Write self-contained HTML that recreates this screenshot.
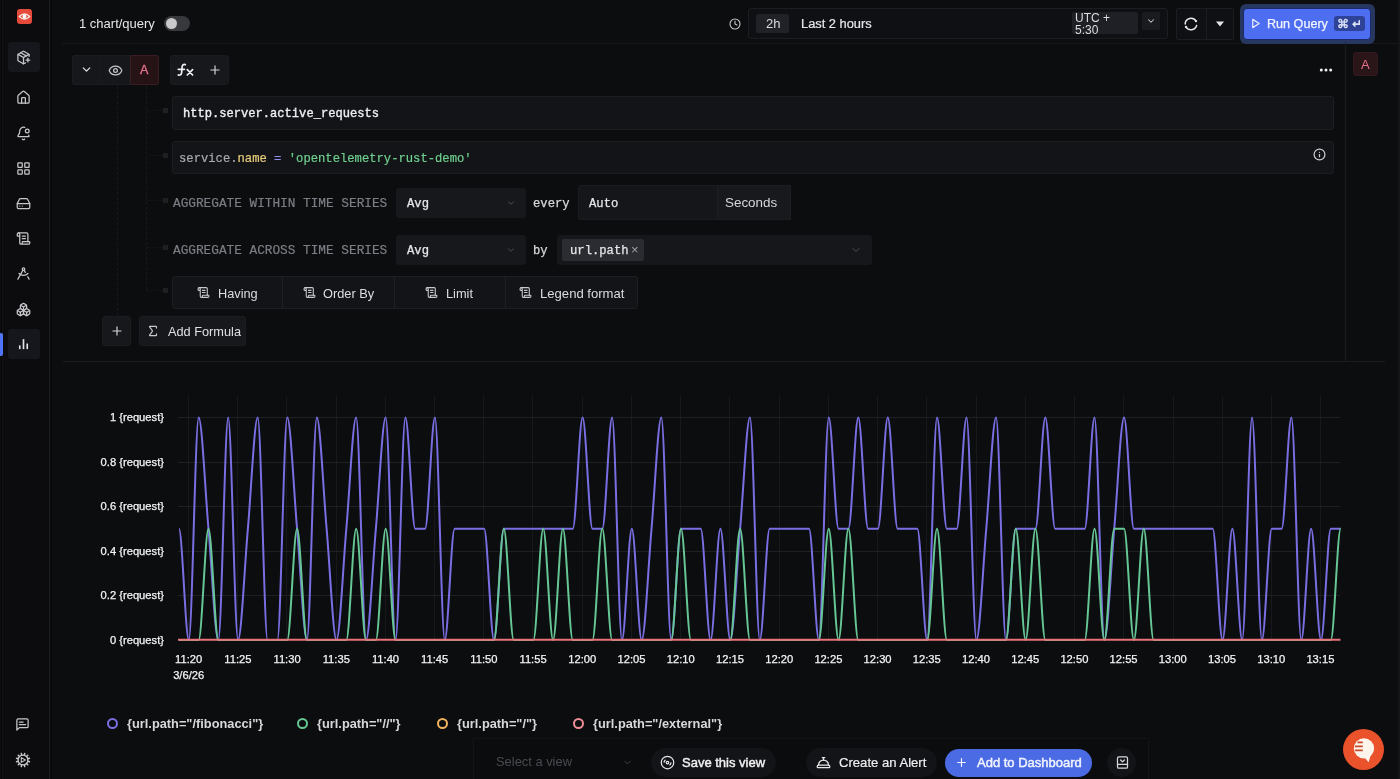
<!DOCTYPE html>
<html><head><meta charset="utf-8">
<style>
*{box-sizing:border-box;margin:0;padding:0}
html,body{width:1400px;height:779px;overflow:hidden;background:#0c0d0f;font-family:"Liberation Sans",sans-serif;color:#e3e3e6}
.a{position:absolute}
svg.i{position:absolute;fill:none;stroke:#c6c7cb;stroke-width:2;stroke-linecap:round;stroke-linejoin:round}
.mono{font-family:"Liberation Mono",monospace}
.t{position:absolute;white-space:nowrap;line-height:1}
.cell{position:absolute;background:#16181c}
</style></head><body><div id="root" style="position:absolute;left:0;top:0;width:1400px;height:779px;will-change:transform">

<!-- SIDEBAR -->
<div class="a" style="left:0;top:0;width:50px;height:779px;background:#0c0c0e;border-right:1px solid #1d1e21"></div><div class="a" style="left:50px;top:0;width:2px;height:779px;background:#09090b"></div><div class="a" style="left:1px;top:0;width:1px;height:779px;background:#070708"></div><div class="a" style="left:2px;top:0;width:1px;height:779px;background:#141417"></div>
<div class="a" style="left:17px;top:9px;width:15px;height:15px;border-radius:3px;background:#e64a3b"></div>
<svg class="a" style="left:17px;top:9px" width="15" height="15" viewBox="0 0 15 15"><path d="M2.3 7.5 Q7.5 2.6 12.7 7.5 Q7.5 12.4 2.3 7.5Z" fill="none" stroke="#f6e6e2" stroke-width="1.4"/><circle cx="7.5" cy="7.5" r="1.9" fill="#fff"/></svg>
<div class="a" style="left:8px;top:42px;width:32px;height:30px;border-radius:3px;background:#15171c"></div>
<svg class="i" style="left:16px;top:50px" width="15" height="15" viewBox="0 0 24 24"><path d="M16 16h6"/><path d="M19 13v6"/><path d="M21 10V8a2 2 0 0 0-1-1.73l-7-4a2 2 0 0 0-2 0l-7 4A2 2 0 0 0 3 8v8a2 2 0 0 0 1 1.73l7 4a2 2 0 0 0 2 0l2-1.14"/><path d="m7.5 4.27 9 5.15"/><polyline points="3.29 7 12 12 20.71 7"/><line x1="12" x2="12" y1="22" y2="12"/></svg>
<svg class="i" style="left:16px;top:90px" width="15" height="15" viewBox="0 0 24 24"><path d="M15 21v-8a1 1 0 0 0-1-1h-4a1 1 0 0 0-1 1v8"/><path d="M3 10a2 2 0 0 1 .709-1.528l7-5.999a2 2 0 0 1 2.582 0l7 5.999A2 2 0 0 1 21 10v9a2 2 0 0 1-2 2H5a2 2 0 0 1-2-2z"/></svg>
<svg class="i" style="left:16px;top:126px" width="15" height="15" viewBox="0 0 24 24"><path d="M10.268 21a2 2 0 0 0 3.464 0"/><path d="M13.916 2.314A6 6 0 0 0 6 8c0 4.499-1.411 5.956-2.74 7.327A1 1 0 0 0 4 17h16a1 1 0 0 0 .74-1.673 9 9 0 0 1-.585-.665"/><circle cx="18" cy="8" r="3"/></svg>
<svg class="i" style="left:16px;top:161px" width="15" height="15" viewBox="0 0 24 24"><rect width="7" height="7" x="3" y="3" rx="1"/><rect width="7" height="7" x="14" y="3" rx="1"/><rect width="7" height="7" x="14" y="14" rx="1"/><rect width="7" height="7" x="3" y="14" rx="1"/></svg>
<svg class="i" style="left:16px;top:196px" width="15" height="15" viewBox="0 0 24 24"><path d="M2 12h20"/><path d="M5.45 5.11 2 12v6a2 2 0 0 0 2 2h16a2 2 0 0 0 2-2v-6l-3.45-6.89A2 2 0 0 0 16.76 4H7.24a2 2 0 0 0-1.79 1.11z"/><path d="M6 16h.01"/><path d="M10 16h.01"/></svg>
<svg class="i" style="left:16px;top:231px" width="15" height="15" viewBox="0 0 24 24"><path d="M15 12h-5"/><path d="M15 8h-5"/><path d="M19 17V5a2 2 0 0 0-2-2H4"/><path d="M8 21h12a2 2 0 0 0 2-2v-1a1 1 0 0 0-1-1H11a1 1 0 0 0-1 1v1a2 2 0 1 1-4 0V5a2 2 0 1 0-4 0v2a1 1 0 0 0 1 1h3"/></svg>
<svg class="i" style="left:16px;top:266px" width="15" height="15" viewBox="0 0 24 24"><path d="m12.99 6.74 1.93 3.44"/><path d="M19.136 12a10 10 0 0 1-14.271 0"/><path d="m21 21-2.16-3.84"/><path d="m3 21 8.02-14.26"/><circle cx="12" cy="5" r="2"/></svg>
<svg class="i" style="left:16px;top:302px" width="15" height="15" viewBox="0 0 24 24"><path d="M2.97 12.92A2 2 0 0 0 2 14.63v3.24a2 2 0 0 0 .97 1.71l3 1.8a2 2 0 0 0 2.06 0L12 19v-5.5l-5-3-4.03 2.42Z"/><path d="m7 16.5-4.74-2.85"/><path d="m7 16.5 5-3"/><path d="M7 16.5v5.17"/><path d="M12 13.5V19l3.970 2.38a2 2 0 0 0 2.06 0l3-1.8a2 2 0 0 0 .97-1.71v-3.24a2 2 0 0 0-.97-1.71L17 10.5l-5 3Z"/><path d="m17 16.5-5-3"/><path d="m17 16.5 4.74-2.85"/><path d="M17 16.5v5.17"/><path d="M7.97 4.42A2 2 0 0 0 7 6.13v4.37l5 3 5-3V6.13a2 2 0 0 0-.97-1.71l-3-1.8a2 2 0 0 0-2.060 0l-3 1.8Z"/><path d="M12 8 7.26 5.15"/><path d="m12 8 4.74-2.85"/><path d="M12 13.5V8"/></svg>
<div class="a" style="left:0;top:333px;width:3px;height:23px;border-radius:0 2px 2px 0;background:#4f74f7"></div>
<div class="a" style="left:8px;top:329px;width:32px;height:30px;border-radius:3px;background:#15171c"></div>
<svg class="i" style="left:16px;top:336px;stroke:#e4e4e7;stroke-width:2.6;stroke-linecap:butt" width="15" height="15" viewBox="0 0 24 24"><path d="M18 21V12"/><path d="M12 21V5"/><path d="M6 21v-6"/></svg>
<svg class="i" style="left:15px;top:717px" width="15" height="15" viewBox="0 0 24 24"><path d="M21 15a2 2 0 0 1-2 2H7l-4 4V5a2 2 0 0 1 2-2h14a2 2 0 0 1 2 2z"/><path d="M13 8H7"/><path d="M17 12H7"/></svg>
<svg class="i" style="left:15px;top:752px;stroke:#c6c7cb;stroke-width:1.3" width="16" height="16" viewBox="0 0 16 16"><circle cx="8" cy="8" r="4.9"/><path d="M12.83 9.29L14.47 9.73M11.54 11.54L12.74 12.74M9.29 12.83L9.73 14.47M6.71 12.83L6.27 14.47M4.46 11.54L3.26 12.74M3.17 9.29L1.53 9.73M3.17 6.71L1.53 6.27M4.46 4.46L3.26 3.26M6.71 3.17L6.27 1.53M9.29 3.17L9.73 1.53M11.54 4.46L12.74 3.26M12.83 6.71L14.47 6.27" stroke-width="1.5"/><path d="M6.3 5.6L10.4 8L6.3 10.4Z" stroke-width="1.1"/></svg>

<!-- TOP BAR -->
<div class="t" style="left:79px;top:17px;font-size:13px;color:#e6e6e8">1 chart/query</div>
<div class="a" style="left:164px;top:16px;width:26px;height:15px;border-radius:8px;background:#38393d"></div>
<div class="a" style="left:166px;top:18px;width:11px;height:11px;border-radius:50%;background:#c9c9cc"></div>
<div class="a" style="left:62px;top:43px;width:1338px;height:1px;background:#17181b"></div>

<svg class="i" style="left:729px;top:18px;stroke-width:2.2" width="12" height="12" viewBox="0 0 24 24"><circle cx="12" cy="12" r="10"/><polyline points="12 6 12 12 16 14"/></svg>
<div class="a" style="left:748px;top:8px;width:420px;height:31px;border-radius:3px;background:#0f1013;border:1px solid #1c1d21"></div>
<div class="a" style="left:756px;top:14px;width:33px;height:19px;border-radius:2px;background:#202227"></div>
<div class="t" style="left:766px;top:17px;font-size:13px;color:#dcdde0">2h</div>
<div class="t" style="left:801px;top:18px;font-size:12.85px;color:#e6e6e8;-webkit-text-stroke:0.2px #e6e6e8">Last 2 hours</div>
<div class="a" style="left:1072px;top:12px;width:66px;height:22px;border-radius:2px;background:#1e2025"></div>
<div class="t" style="left:1075px;top:13px;font-size:12px;line-height:11.5px;color:#dcdde0">UTC +<br>5:30</div>
<div class="a" style="left:1142px;top:12px;width:18px;height:18px;border-radius:2px;background:#191b1f"></div>
<svg class="i" style="left:1146px;top:16px;stroke-width:2.5" width="10" height="10" viewBox="0 0 24 24"><path d="m6 9 6 6 6-6"/></svg>

<div class="a" style="left:1176px;top:8px;width:58px;height:32px;border-radius:2px;background:#0f1013;border:1px solid #1c1d21"></div>
<div class="a" style="left:1206px;top:9px;width:1px;height:30px;background:#1c1d21"></div>
<svg class="i" style="left:1184px;top:17px;stroke:#e6e6e8;stroke-width:1.5" width="14" height="14" viewBox="0 0 14 14"><path d="M1.2 7A5.8 5.8 0 0 1 12 4.1"/><path d="M12.6 8.5A5.8 5.8 0 0 1 2 9.9"/><circle cx="12" cy="4.1" r="1.2" fill="#e6e6e8" stroke="none"/><circle cx="2" cy="9.9" r="1.2" fill="#e6e6e8" stroke="none"/></svg>
<svg class="a" style="left:1215px;top:20px" width="10" height="8" viewBox="0 0 10 8"><path d="M1 1.5h8L5 6.5z" fill="#e4e4e7"/></svg>

<div class="a" style="left:1240px;top:4px;width:135px;height:40px;border-radius:6px;background:#27375f"></div>
<div class="a" style="left:1243px;top:8px;width:128px;height:32px;border-radius:4px;background:#4e6ef2;border:1px solid #1b2a6a"></div>
<svg class="i" style="left:1250px;top:18px;stroke:#e8ecff;stroke-width:2.6" width="11" height="11" viewBox="0 0 24 24"><polygon points="6 3 20 12 6 21 6 3"/></svg>
<div class="t" style="left:1267px;top:18px;font-size:12.6px;color:#f2f4ff;-webkit-text-stroke:0.25px #f2f4ff">Run Query</div>
<div class="a" style="left:1334px;top:16px;width:31px;height:15px;border-radius:3px;background:#2e4397"></div>
<div class="t" style="left:1337px;top:18px;font-size:12px;color:#e8ecff;-webkit-text-stroke:0.3px #e8ecff">&#8984; &#8629;</div>



<!-- QUERY HEADER -->
<div class="a" style="left:72px;top:55px;width:87px;height:30px;border-radius:2px;background:#16171b;border:1px solid #1a1c20"></div>
<div class="a" style="left:100px;top:56px;width:1px;height:28px;background:#181a1e"></div>
<div class="a" style="left:130px;top:55px;width:29px;height:30px;background:#261316;border:1px solid #3a1d23;border-radius:0 2px 2px 0"></div>
<svg class="i" style="left:80px;top:63px;stroke-width:2.3;stroke:#e0e0e4" width="13" height="13" viewBox="0 0 24 24"><path d="m6 9 6 6 6-6"/></svg>
<svg class="i" style="left:108px;top:63px;stroke-width:2" width="15" height="15" viewBox="0 0 24 24"><path d="M2.062 12.348a1 1 0 0 1 0-.696 10.75 10.75 0 0 1 19.876 0 1 1 0 0 1 0 .696 10.75 10.75 0 0 1-19.876 0"/><circle cx="12" cy="12" r="3"/></svg>
<div class="t" style="left:140px;top:64px;font-size:12.5px;color:#e6738e;-webkit-text-stroke:0.3px #e6738e">A</div>
<div class="a" style="left:170px;top:55px;width:59px;height:30px;border-radius:3px;background:#16181c;border:1px solid #1a1c20"></div>
<svg class="i" style="left:177px;top:63px;stroke:#f0f0f2;stroke-width:1.7" width="18" height="14" viewBox="0 0 18 14"><path d="M8.3 1.6C6.6 0.9 5.3 1.8 5.1 4L4.6 9.6C4.4 11.9 3 12.6 1.3 12"/><path d="M1.3 6.3H7.4"/><path d="M10.3 6.6L15.6 12M15.6 6.6L10.3 12"/></svg>
<svg class="i" style="left:208px;top:63px;stroke:#d6d6da;stroke-width:2" width="14" height="14" viewBox="0 0 24 24"><path d="M5 12h14"/><path d="M12 5v14"/></svg>
<svg class="a" style="left:1318px;top:66px" width="16" height="8" viewBox="0 0 16 8"><circle cx="3.3" cy="4" r="1.5" fill="#f0f0f2"/><circle cx="8" cy="4" r="1.5" fill="#f0f0f2"/><circle cx="12.7" cy="4" r="1.5" fill="#f0f0f2"/></svg>

<!-- right panel -->
<div class="a" style="left:1345px;top:43px;width:1px;height:318px;background:#1b1c20"></div>
<div class="a" style="left:1353px;top:52px;width:25px;height:24px;border-radius:3px;background:#2a1519;border:1px solid #33191e"></div>
<div class="t" style="left:1361px;top:58px;font-size:13px;color:#e27189">A</div>
<div class="a" style="left:1398px;top:0;width:2px;height:779px;background:#131417"></div>

<!-- tree lines -->
<div class="a" style="left:117px;top:86px;width:0;height:230px;border-left:1px dashed #18191c"></div>
<div class="a" style="left:146px;top:86px;width:0;height:204px;border-left:1px dashed #18191c"></div>
<div class="a" style="left:147px;top:110px;width:16px;height:0;border-top:1px dashed #141518"></div>
<div class="a" style="left:147px;top:155px;width:16px;height:0;border-top:1px dashed #141518"></div>
<div class="a" style="left:147px;top:200px;width:16px;height:0;border-top:1px dashed #141518"></div>
<div class="a" style="left:147px;top:247px;width:16px;height:0;border-top:1px dashed #141518"></div>
<div class="a" style="left:147px;top:290px;width:16px;height:0;border-top:1px dashed #141518"></div>
<div class="a" style="left:163px;top:108px;width:5px;height:5px;background:#1f2024"></div>
<div class="a" style="left:163px;top:153px;width:5px;height:5px;background:#1f2024"></div>
<div class="a" style="left:163px;top:198px;width:5px;height:5px;background:#1f2024"></div>
<div class="a" style="left:163px;top:245px;width:5px;height:5px;background:#1f2024"></div>
<div class="a" style="left:163px;top:288px;width:5px;height:5px;background:#1f2024"></div>

<!-- metric input -->
<div class="a" style="left:172px;top:96px;width:1162px;height:34px;border-radius:3px;background:#131418;border:1px solid #1c1e22"></div>
<div class="t mono" style="left:183px;top:108px;font-size:12.1px;color:#f0f0f2;-webkit-text-stroke:0.35px #f0f0f2">http.server.active_requests</div>
<!-- filter -->
<div class="a" style="left:172px;top:141px;width:1162px;height:33px;border-radius:3px;background:#131418;border:1px solid #1c1e22"></div>
<div class="t mono" style="left:179px;top:153px;font-size:12.2px;color:#a9aab0;-webkit-text-stroke:0.2px"><span>service.</span><span style="color:#e9d07c">name</span> <span style="color:#8f91f0">=</span> <span style="color:#6fd08e">'opentelemetry-rust-demo'</span></div>
<svg class="i" style="left:1313px;top:148px;stroke:#d0d0d4;stroke-width:2.2" width="13" height="13" viewBox="0 0 24 24"><circle cx="12" cy="12" r="10"/><path d="M12 16v-4"/><path d="M12 8h.01"/></svg>

<!-- aggregate within -->
<div class="t mono" style="left:173px;top:198px;font-size:12.75px;color:#7c7e85;-webkit-text-stroke:0.2px #7c7e85">AGGREGATE WITHIN TIME SERIES</div>
<div class="a" style="left:396px;top:188px;width:130px;height:30px;border-radius:3px;background:#16181c"></div>
<div class="t mono" style="left:407px;top:198px;font-size:12.2px;color:#e6e6e8;-webkit-text-stroke:0.25px #e6e6e8">Avg</div>
<svg class="i" style="left:506px;top:198px;stroke:#5d5f66;stroke-width:1.8" width="10" height="10" viewBox="0 0 24 24"><path d="m6 9 6 6 6-6"/></svg>
<div class="t mono" style="left:533px;top:198px;font-size:12.2px;color:#d8d8dc;-webkit-text-stroke:0.25px #d8d8dc">every</div>
<div class="a" style="left:578px;top:185px;width:213px;height:35px;border-radius:2px;background:#15161a;border:1px solid #1a1c20"></div>
<div class="a" style="left:717px;top:185px;width:74px;height:35px;background:#17191d;border:1px solid #1c1e22"></div>
<div class="t mono" style="left:589px;top:198px;font-size:12.2px;color:#e6e6e8;-webkit-text-stroke:0.25px #e6e6e8">Auto</div>
<div class="t" style="left:725px;top:196px;font-size:13.4px;color:#d8d8dc">Seconds</div>

<!-- aggregate across -->
<div class="t mono" style="left:173px;top:245px;font-size:12.75px;color:#7c7e85;-webkit-text-stroke:0.2px #7c7e85">AGGREGATE ACROSS TIME SERIES</div>
<div class="a" style="left:396px;top:235px;width:130px;height:30px;border-radius:3px;background:#16181c"></div>
<div class="t mono" style="left:407px;top:245px;font-size:12.2px;color:#e6e6e8;-webkit-text-stroke:0.25px #e6e6e8">Avg</div>
<svg class="i" style="left:506px;top:245px;stroke:#5d5f66;stroke-width:1.8" width="10" height="10" viewBox="0 0 24 24"><path d="m6 9 6 6 6-6"/></svg>
<div class="t mono" style="left:533px;top:245px;font-size:12.2px;color:#d8d8dc;-webkit-text-stroke:0.25px #d8d8dc">by</div>
<div class="a" style="left:557px;top:235px;width:315px;height:30px;border-radius:3px;background:#15171b"></div>
<div class="a" style="left:562px;top:239px;width:82px;height:22px;border-radius:2px;background:#2a2c31"></div>
<div class="t mono" style="left:570px;top:245px;font-size:12.2px;color:#e6e6e8;-webkit-text-stroke:0.25px #e6e6e8">url.path</div>
<div class="t" style="left:631px;top:243px;font-size:13px;color:#a0a1a6">&#215;</div>
<svg class="i" style="left:850px;top:244px;stroke:#5d5f66;stroke-width:1.6" width="12" height="12" viewBox="0 0 24 24"><path d="m6 9 6 6 6-6"/></svg>

<!-- having row -->
<div class="a" style="left:172px;top:276px;width:466px;height:33px;border-radius:3px;background:#131418;border:1px solid #1c1e22"></div>
<div class="a" style="left:282px;top:277px;width:1px;height:31px;background:#1e2024"></div>
<div class="a" style="left:394px;top:277px;width:1px;height:31px;background:#1e2024"></div>
<div class="a" style="left:505px;top:277px;width:1px;height:31px;background:#1e2024"></div>
<svg class="i" style="left:197px;top:286px;stroke:#c9c9cd;stroke-width:2" width="13" height="13" viewBox="0 0 24 24"><path d="M15 12h-5"/><path d="M15 8h-5"/><path d="M19 17V5a2 2 0 0 0-2-2H4"/><path d="M8 21h12a2 2 0 0 0 2-2v-1a1 1 0 0 0-1-1H11a1 1 0 0 0-1 1v1a2 2 0 1 1-4 0V5a2 2 0 1 0-4 0v2a1 1 0 0 0 1 1h3"/></svg>
<svg class="i" style="left:303px;top:286px;stroke:#c9c9cd;stroke-width:2" width="13" height="13" viewBox="0 0 24 24"><path d="M15 12h-5"/><path d="M15 8h-5"/><path d="M19 17V5a2 2 0 0 0-2-2H4"/><path d="M8 21h12a2 2 0 0 0 2-2v-1a1 1 0 0 0-1-1H11a1 1 0 0 0-1 1v1a2 2 0 1 1-4 0V5a2 2 0 1 0-4 0v2a1 1 0 0 0 1 1h3"/></svg>
<svg class="i" style="left:425px;top:286px;stroke:#c9c9cd;stroke-width:2" width="13" height="13" viewBox="0 0 24 24"><path d="M15 12h-5"/><path d="M15 8h-5"/><path d="M19 17V5a2 2 0 0 0-2-2H4"/><path d="M8 21h12a2 2 0 0 0 2-2v-1a1 1 0 0 0-1-1H11a1 1 0 0 0-1 1v1a2 2 0 1 1-4 0V5a2 2 0 1 0-4 0v2a1 1 0 0 0 1 1h3"/></svg>
<svg class="i" style="left:519px;top:286px;stroke:#c9c9cd;stroke-width:2" width="13" height="13" viewBox="0 0 24 24"><path d="M15 12h-5"/><path d="M15 8h-5"/><path d="M19 17V5a2 2 0 0 0-2-2H4"/><path d="M8 21h12a2 2 0 0 0 2-2v-1a1 1 0 0 0-1-1H11a1 1 0 0 0-1 1v1a2 2 0 1 1-4 0V5a2 2 0 1 0-4 0v2a1 1 0 0 0 1 1h3"/></svg>
<div class="t" style="left:218px;top:288px;font-size:12.75px;color:#dcdde0">Having</div>
<div class="t" style="left:323px;top:288px;font-size:12.8px;color:#dcdde0">Order By</div>
<div class="t" style="left:446px;top:288px;font-size:12.8px;color:#dcdde0">Limit</div>
<div class="t" style="left:540px;top:287px;font-size:13.1px;color:#dcdde0">Legend format</div>

<!-- add formula -->
<div class="a" style="left:102px;top:316px;width:29px;height:30px;border-radius:3px;background:#16181c;border:1px solid #1b1d21"></div>
<svg class="i" style="left:110px;top:324px;stroke:#d6d6da;stroke-width:2" width="14" height="14" viewBox="0 0 24 24"><path d="M5 12h14"/><path d="M12 5v14"/></svg>
<div class="a" style="left:139px;top:316px;width:107px;height:30px;border-radius:3px;background:#16181c;border:1px solid #1b1d21"></div>
<svg class="i" style="left:146px;top:324px;stroke:#c9c9cd;stroke-width:2" width="14" height="14" viewBox="0 0 24 24"><path d="M18 7V5a1 1 0 0 0-1-1H6.5a.5.5 0 0 0-.4.8l4.5 6a2 2 0 0 1 0 2.4l-4.5 6a.5.5 0 0 0 .4.8H17a1 1 0 0 0 1-1v-2"/></svg>
<div class="t" style="left:168px;top:326px;font-size:12.75px;color:#e0e0e3">Add Formula</div>

<div class="a" style="left:63px;top:361px;width:1322px;height:1px;background:#1b1c20"></div>


<!-- CHART -->
<svg class="a" style="left:0;top:0" width="1400" height="779" viewBox="0 0 1400 779">
<g stroke="#19191c" stroke-width="1" shape-rendering="crispEdges"><line x1="188.5" y1="396" x2="188.5" y2="640" /><line x1="237.5" y1="396" x2="237.5" y2="640" /><line x1="286.5" y1="396" x2="286.5" y2="640" /><line x1="336.5" y1="396" x2="336.5" y2="640" /><line x1="385.5" y1="396" x2="385.5" y2="640" /><line x1="434.5" y1="396" x2="434.5" y2="640" /><line x1="483.5" y1="396" x2="483.5" y2="640" /><line x1="532.5" y1="396" x2="532.5" y2="640" /><line x1="582.5" y1="396" x2="582.5" y2="640" /><line x1="631.5" y1="396" x2="631.5" y2="640" /><line x1="680.5" y1="396" x2="680.5" y2="640" /><line x1="729.5" y1="396" x2="729.5" y2="640" /><line x1="779.5" y1="396" x2="779.5" y2="640" /><line x1="828.5" y1="396" x2="828.5" y2="640" /><line x1="877.5" y1="396" x2="877.5" y2="640" /><line x1="926.5" y1="396" x2="926.5" y2="640" /><line x1="976.5" y1="396" x2="976.5" y2="640" /><line x1="1025.5" y1="396" x2="1025.5" y2="640" /><line x1="1074.5" y1="396" x2="1074.5" y2="640" /><line x1="1123.5" y1="396" x2="1123.5" y2="640" /><line x1="1173.5" y1="396" x2="1173.5" y2="640" /><line x1="1222.5" y1="396" x2="1222.5" y2="640" /><line x1="1271.5" y1="396" x2="1271.5" y2="640" /><line x1="1320.5" y1="396" x2="1320.5" y2="640" /></g><g stroke="#1f2023" stroke-width="1" shape-rendering="crispEdges"><line x1="178" y1="417.5" x2="1340" y2="417.5" /><line x1="178" y1="462.5" x2="1340" y2="462.5" /><line x1="178" y1="506.5" x2="1340" y2="506.5" /><line x1="178" y1="551.5" x2="1340" y2="551.5" /><line x1="178" y1="595.5" x2="1340" y2="595.5" /></g>
<g font-family="Liberation Sans" font-size="11.2" fill="#f4f4f6" stroke="#f4f4f6" stroke-width="0.25"><text x="164" y="421.4" text-anchor="end">1 {request}</text><text x="164" y="465.9" text-anchor="end">0.8 {request}</text><text x="164" y="510.4" text-anchor="end">0.6 {request}</text><text x="164" y="554.8" text-anchor="end">0.4 {request}</text><text x="164" y="599.3" text-anchor="end">0.2 {request}</text><text x="164" y="643.8" text-anchor="end">0 {request}</text><text x="188.7" y="663" text-anchor="middle">11:20</text><text x="237.9" y="663" text-anchor="middle">11:25</text><text x="287.1" y="663" text-anchor="middle">11:30</text><text x="336.3" y="663" text-anchor="middle">11:35</text><text x="385.5" y="663" text-anchor="middle">11:40</text><text x="434.7" y="663" text-anchor="middle">11:45</text><text x="483.9" y="663" text-anchor="middle">11:50</text><text x="533.1" y="663" text-anchor="middle">11:55</text><text x="582.3" y="663" text-anchor="middle">12:00</text><text x="631.5" y="663" text-anchor="middle">12:05</text><text x="680.8" y="663" text-anchor="middle">12:10</text><text x="730.0" y="663" text-anchor="middle">12:15</text><text x="779.2" y="663" text-anchor="middle">12:20</text><text x="828.4" y="663" text-anchor="middle">12:25</text><text x="877.6" y="663" text-anchor="middle">12:30</text><text x="926.8" y="663" text-anchor="middle">12:35</text><text x="976.0" y="663" text-anchor="middle">12:40</text><text x="1025.2" y="663" text-anchor="middle">12:45</text><text x="1074.4" y="663" text-anchor="middle">12:50</text><text x="1123.6" y="663" text-anchor="middle">12:55</text><text x="1172.8" y="663" text-anchor="middle">13:00</text><text x="1222.0" y="663" text-anchor="middle">13:05</text><text x="1271.2" y="663" text-anchor="middle">13:10</text><text x="1320.4" y="663" text-anchor="middle">13:15</text><text x="188.7" y="679" text-anchor="middle">3/6/26</text></g>
<path d="M178.96 528.85C182.24 528.85 185.52 640.10 188.80 640.10C192.08 640.10 195.36 417.60 198.65 417.60C201.93 417.60 205.21 491.77 208.49 528.85C211.77 565.93 215.05 640.10 218.34 640.10C221.62 640.10 224.90 417.60 228.18 417.60C231.46 417.60 234.74 640.10 238.03 640.10C241.31 640.10 244.59 565.93 247.87 528.85C251.15 491.77 254.43 417.60 257.72 417.60C261.00 417.60 264.28 640.10 267.56 640.10C270.84 640.10 274.12 640.10 277.41 640.10C280.69 640.10 283.97 417.60 287.25 417.60C290.53 417.60 293.81 491.77 297.10 528.85C300.38 565.93 303.66 640.10 306.94 640.10C310.22 640.10 313.50 417.60 316.79 417.60C320.07 417.60 323.35 491.77 326.63 528.85C329.91 565.93 333.19 640.10 336.48 640.10C339.76 640.10 343.04 565.93 346.32 528.85C349.60 491.77 352.88 417.60 356.17 417.60C359.45 417.60 362.73 640.10 366.01 640.10C369.29 640.10 372.57 565.93 375.86 528.85C379.14 491.77 382.42 417.60 385.70 417.60C388.98 417.60 392.26 640.10 395.55 640.10C398.83 640.10 402.11 417.60 405.39 417.60C408.67 417.60 411.95 528.85 415.24 528.85C418.52 528.85 421.80 528.85 425.08 528.85C428.36 528.85 431.64 417.60 434.93 417.60C438.21 417.60 441.49 640.10 444.77 640.10C448.05 640.10 451.33 528.85 454.62 528.85C457.90 528.85 461.18 528.85 464.46 528.85C467.74 528.85 471.02 528.85 474.31 528.85C477.59 528.85 480.87 528.85 484.15 528.85C487.43 528.85 490.71 640.10 494.00 640.10C497.28 640.10 500.56 528.85 503.84 528.85C507.12 528.85 510.40 528.85 513.69 528.85C516.97 528.85 520.25 528.85 523.53 528.85C526.81 528.85 530.09 528.85 533.38 528.85C536.66 528.85 539.94 528.85 543.22 528.85C546.50 528.85 549.78 528.85 553.07 528.85C556.35 528.85 559.63 528.85 562.91 528.85C566.19 528.85 569.47 528.85 572.76 528.85C576.04 528.85 579.32 417.60 582.60 417.60C585.88 417.60 589.16 528.85 592.45 528.85C595.73 528.85 599.01 528.85 602.29 528.85C605.57 528.85 608.85 417.60 612.13 417.60C615.42 417.60 618.70 640.10 621.98 640.10C625.26 640.10 628.54 528.85 631.83 528.85C635.11 528.85 638.39 640.10 641.67 640.10C644.95 640.10 648.23 565.93 651.52 528.85C654.80 491.77 658.08 417.60 661.36 417.60C664.64 417.60 667.92 640.10 671.21 640.10C674.49 640.10 677.77 528.85 681.05 528.85C684.33 528.85 687.61 528.85 690.89 528.85C694.18 528.85 697.46 528.85 700.74 528.85C704.02 528.85 707.30 640.10 710.59 640.10C713.87 640.10 717.15 528.85 720.43 528.85C723.71 528.85 726.99 640.10 730.28 640.10C733.56 640.10 736.84 565.93 740.12 528.85C743.40 491.77 746.68 417.60 749.97 417.60C753.25 417.60 756.53 640.10 759.81 640.10C763.09 640.10 766.37 528.85 769.65 528.85C772.94 528.85 776.22 528.85 779.50 528.85C782.78 528.85 786.06 528.85 789.35 528.85C792.63 528.85 795.91 528.85 799.19 528.85C802.47 528.85 805.75 528.85 809.04 528.85C812.32 528.85 815.60 640.10 818.88 640.10C822.16 640.10 825.44 417.60 828.73 417.60C832.01 417.60 835.29 528.85 838.57 528.85C841.85 528.85 845.13 528.85 848.41 528.85C851.70 528.85 854.98 417.60 858.26 417.60C861.54 417.60 864.82 528.85 868.11 528.85C871.39 528.85 874.67 528.85 877.95 528.85C881.23 528.85 884.51 417.60 887.80 417.60C891.08 417.60 894.36 528.85 897.64 528.85C900.92 528.85 904.20 528.85 907.49 528.85C910.77 528.85 914.05 528.85 917.33 528.85C920.61 528.85 923.89 640.10 927.17 640.10C930.46 640.10 933.74 417.60 937.02 417.60C940.30 417.60 943.58 528.85 946.87 528.85C950.15 528.85 953.43 528.85 956.71 528.85C959.99 528.85 963.27 417.60 966.56 417.60C969.84 417.60 973.12 640.10 976.40 640.10C979.68 640.10 982.96 565.93 986.25 528.85C989.53 491.77 992.81 417.60 996.09 417.60C999.37 417.60 1002.65 640.10 1005.94 640.10C1009.22 640.10 1012.50 528.85 1015.78 528.85C1019.06 528.85 1022.34 528.85 1025.62 528.85C1028.91 528.85 1032.19 528.85 1035.47 528.85C1038.75 528.85 1042.03 417.60 1045.32 417.60C1048.60 417.60 1051.88 528.85 1055.16 528.85C1058.44 528.85 1061.72 528.85 1065.01 528.85C1068.29 528.85 1071.57 528.85 1074.85 528.85C1078.13 528.85 1081.41 528.85 1084.70 528.85C1087.98 528.85 1091.26 417.60 1094.54 417.60C1097.82 417.60 1101.10 640.10 1104.38 640.10C1107.67 640.10 1110.95 565.93 1114.23 528.85C1117.51 491.77 1120.79 417.60 1124.08 417.60C1127.36 417.60 1130.64 528.85 1133.92 528.85C1137.20 528.85 1140.48 528.85 1143.77 528.85C1147.05 528.85 1150.33 528.85 1153.61 528.85C1156.89 528.85 1160.17 528.85 1163.46 528.85C1166.74 528.85 1170.02 528.85 1173.30 528.85C1176.58 528.85 1179.86 528.85 1183.14 528.85C1186.43 528.85 1189.71 528.85 1192.99 528.85C1196.27 528.85 1199.55 528.85 1202.84 528.85C1206.12 528.85 1209.40 528.85 1212.68 528.85C1215.96 528.85 1219.24 640.10 1222.53 640.10C1225.81 640.10 1229.09 528.85 1232.37 528.85C1235.65 528.85 1238.93 640.10 1242.21 640.10C1245.50 640.10 1248.78 417.60 1252.06 417.60C1255.34 417.60 1258.62 640.10 1261.90 640.10C1265.19 640.10 1268.47 528.85 1271.75 528.85C1275.03 528.85 1278.31 528.85 1281.60 528.85C1284.88 528.85 1288.16 417.60 1291.44 417.60C1294.72 417.60 1298.00 640.10 1301.29 640.10C1304.57 640.10 1307.85 528.85 1311.13 528.85C1314.41 528.85 1317.69 640.10 1320.98 640.10C1324.26 640.10 1327.54 528.85 1330.82 528.85C1334.10 528.85 1337.38 528.85 1340.66 528.85" fill="none" stroke="#7a6fe2" stroke-width="2"/>
<path d="M178.96 640.10C182.24 640.10 185.52 640.10 188.80 640.10C192.08 640.10 195.36 640.10 198.65 640.10C201.93 640.10 205.21 528.85 208.49 528.85C211.77 528.85 215.05 640.10 218.34 640.10C221.62 640.10 224.90 640.10 228.18 640.10C231.46 640.10 234.74 640.10 238.03 640.10C241.31 640.10 244.59 640.10 247.87 640.10C251.15 640.10 254.43 640.10 257.72 640.10C261.00 640.10 264.28 640.10 267.56 640.10C270.84 640.10 274.12 640.10 277.41 640.10C280.69 640.10 283.97 640.10 287.25 640.10C290.53 640.10 293.81 528.85 297.10 528.85C300.38 528.85 303.66 640.10 306.94 640.10C310.22 640.10 313.50 640.10 316.79 640.10C320.07 640.10 323.35 640.10 326.63 640.10C329.91 640.10 333.19 640.10 336.48 640.10C339.76 640.10 343.04 640.10 346.32 640.10C349.60 640.10 352.88 528.85 356.17 528.85C359.45 528.85 362.73 640.10 366.01 640.10C369.29 640.10 372.57 640.10 375.86 640.10C379.14 640.10 382.42 528.85 385.70 528.85C388.98 528.85 392.26 640.10 395.55 640.10C398.83 640.10 402.11 640.10 405.39 640.10C408.67 640.10 411.95 640.10 415.24 640.10C418.52 640.10 421.80 640.10 425.08 640.10C428.36 640.10 431.64 640.10 434.93 640.10C438.21 640.10 441.49 640.10 444.77 640.10C448.05 640.10 451.33 640.10 454.62 640.10C457.90 640.10 461.18 640.10 464.46 640.10C467.74 640.10 471.02 640.10 474.31 640.10C477.59 640.10 480.87 640.10 484.15 640.10C487.43 640.10 490.71 640.10 494.00 640.10C497.28 640.10 500.56 528.85 503.84 528.85C507.12 528.85 510.40 640.10 513.69 640.10C516.97 640.10 520.25 640.10 523.53 640.10C526.81 640.10 530.09 640.10 533.38 640.10C536.66 640.10 539.94 528.85 543.22 528.85C546.50 528.85 549.78 640.10 553.07 640.10C556.35 640.10 559.63 528.85 562.91 528.85C566.19 528.85 569.47 640.10 572.76 640.10C576.04 640.10 579.32 640.10 582.60 640.10C585.88 640.10 589.16 640.10 592.45 640.10C595.73 640.10 599.01 528.85 602.29 528.85C605.57 528.85 608.85 640.10 612.13 640.10C615.42 640.10 618.70 640.10 621.98 640.10C625.26 640.10 628.54 640.10 631.83 640.10C635.11 640.10 638.39 640.10 641.67 640.10C644.95 640.10 648.23 640.10 651.52 640.10C654.80 640.10 658.08 640.10 661.36 640.10C664.64 640.10 667.92 640.10 671.21 640.10C674.49 640.10 677.77 528.85 681.05 528.85C684.33 528.85 687.61 640.10 690.89 640.10C694.18 640.10 697.46 640.10 700.74 640.10C704.02 640.10 707.30 640.10 710.59 640.10C713.87 640.10 717.15 640.10 720.43 640.10C723.71 640.10 726.99 640.10 730.28 640.10C733.56 640.10 736.84 528.85 740.12 528.85C743.40 528.85 746.68 640.10 749.97 640.10C753.25 640.10 756.53 640.10 759.81 640.10C763.09 640.10 766.37 640.10 769.65 640.10C772.94 640.10 776.22 640.10 779.50 640.10C782.78 640.10 786.06 640.10 789.35 640.10C792.63 640.10 795.91 640.10 799.19 640.10C802.47 640.10 805.75 640.10 809.04 640.10C812.32 640.10 815.60 640.10 818.88 640.10C822.16 640.10 825.44 528.85 828.73 528.85C832.01 528.85 835.29 640.10 838.57 640.10C841.85 640.10 845.13 528.85 848.41 528.85C851.70 528.85 854.98 640.10 858.26 640.10C861.54 640.10 864.82 640.10 868.11 640.10C871.39 640.10 874.67 640.10 877.95 640.10C881.23 640.10 884.51 640.10 887.80 640.10C891.08 640.10 894.36 640.10 897.64 640.10C900.92 640.10 904.20 640.10 907.49 640.10C910.77 640.10 914.05 640.10 917.33 640.10C920.61 640.10 923.89 640.10 927.17 640.10C930.46 640.10 933.74 528.85 937.02 528.85C940.30 528.85 943.58 640.10 946.87 640.10C950.15 640.10 953.43 640.10 956.71 640.10C959.99 640.10 963.27 640.10 966.56 640.10C969.84 640.10 973.12 640.10 976.40 640.10C979.68 640.10 982.96 640.10 986.25 640.10C989.53 640.10 992.81 640.10 996.09 640.10C999.37 640.10 1002.65 640.10 1005.94 640.10C1009.22 640.10 1012.50 528.85 1015.78 528.85C1019.06 528.85 1022.34 640.10 1025.62 640.10C1028.91 640.10 1032.19 528.85 1035.47 528.85C1038.75 528.85 1042.03 640.10 1045.32 640.10C1048.60 640.10 1051.88 640.10 1055.16 640.10C1058.44 640.10 1061.72 640.10 1065.01 640.10C1068.29 640.10 1071.57 640.10 1074.85 640.10C1078.13 640.10 1081.41 640.10 1084.70 640.10C1087.98 640.10 1091.26 528.85 1094.54 528.85C1097.82 528.85 1101.10 640.10 1104.38 640.10C1107.67 640.10 1110.95 528.85 1114.23 528.85C1117.51 528.85 1120.79 528.85 1124.08 528.85C1127.36 528.85 1130.64 640.10 1133.92 640.10C1137.20 640.10 1140.48 528.85 1143.77 528.85C1147.05 528.85 1150.33 640.10 1153.61 640.10C1156.89 640.10 1160.17 640.10 1163.46 640.10C1166.74 640.10 1170.02 640.10 1173.30 640.10C1176.58 640.10 1179.86 640.10 1183.14 640.10C1186.43 640.10 1189.71 640.10 1192.99 640.10C1196.27 640.10 1199.55 640.10 1202.84 640.10C1206.12 640.10 1209.40 640.10 1212.68 640.10C1215.96 640.10 1219.24 640.10 1222.53 640.10C1225.81 640.10 1229.09 640.10 1232.37 640.10C1235.65 640.10 1238.93 640.10 1242.21 640.10C1245.50 640.10 1248.78 640.10 1252.06 640.10C1255.34 640.10 1258.62 640.10 1261.90 640.10C1265.19 640.10 1268.47 640.10 1271.75 640.10C1275.03 640.10 1278.31 640.10 1281.60 640.10C1284.88 640.10 1288.16 640.10 1291.44 640.10C1294.72 640.10 1298.00 640.10 1301.29 640.10C1304.57 640.10 1307.85 640.10 1311.13 640.10C1314.41 640.10 1317.69 640.10 1320.98 640.10C1324.26 640.10 1327.54 640.10 1330.82 640.10C1334.10 640.10 1337.38 528.85 1340.66 528.85" fill="none" stroke="#66c694" stroke-width="2"/>
<line x1="178" y1="639.8" x2="1340.5" y2="639.8" stroke="#e8727a" stroke-width="2"/>
</svg>

<!-- LEGEND -->
<div class="a" style="left:107px;top:718px;width:11px;height:11px;border-radius:50%;border:2px solid #7a6fe2"></div>
<div class="t" style="left:127px;top:718px;font-size:12.8px;color:#d8d8db;font-weight:bold">{url.path="/fibonacci"}</div>
<div class="a" style="left:297px;top:718px;width:11px;height:11px;border-radius:50%;border:2px solid #66c694"></div>
<div class="t" style="left:317px;top:718px;font-size:12.8px;color:#d8d8db;font-weight:bold">{url.path="//"}</div>
<div class="a" style="left:437px;top:718px;width:11px;height:11px;border-radius:50%;border:2px solid #efb25e"></div>
<div class="t" style="left:457px;top:718px;font-size:12.8px;color:#d8d8db;font-weight:bold">{url.path="/"}</div>
<div class="a" style="left:573px;top:718px;width:11px;height:11px;border-radius:50%;border:2px solid #ee8e96"></div>
<div class="t" style="left:593px;top:718px;font-size:12.8px;color:#d8d8db;font-weight:bold">{url.path="/external"}</div>

<!-- BOTTOM TOOLBAR -->
<div class="a" style="left:473px;top:738px;width:676px;height:45px;background:#0b0c0e;border:1px solid #131417;border-bottom:none"></div>
<div class="t" style="left:496px;top:756px;font-size:12.9px;color:#4a4b50">Select a view</div>
<svg class="i" style="left:622px;top:757px;stroke:#45464b;stroke-width:2" width="11" height="11" viewBox="0 0 24 24"><path d="m6 9 6 6 6-6"/></svg>
<div class="a" style="left:651px;top:748px;width:125px;height:29px;border-radius:15px;background:#131417"></div>
<svg class="i" style="left:660px;top:755px;stroke:#e6e6e8;stroke-width:2" width="15" height="15" viewBox="0 0 24 24"><circle cx="12" cy="12" r="10"/><path d="M6.5 11.5c.2-1.3.8-2.4 1.7-3.2"/><circle cx="12" cy="12" r="2"/><path d="M17.5 12.5c-.2 1.3-.8 2.4-1.7 3.2"/></svg>
<div class="t" style="left:682px;top:756px;font-size:13px;color:#f0f0f2;-webkit-text-stroke:0.45px #f0f0f2">Save this view</div>
<div class="a" style="left:806px;top:748px;width:131px;height:29px;border-radius:15px;background:#131417"></div>
<svg class="i" style="left:816px;top:755px;stroke:#e6e6e8;stroke-width:2" width="15" height="15" viewBox="0 0 24 24"><path d="M3 20a1 1 0 0 1-1-1v-1a2 2 0 0 1 2-2h16a2 2 0 0 1 2 2v1a1 1 0 0 1-1 1Z"/><path d="M20 16a8 8 0 1 0-16 0"/><path d="M12 4v4"/><path d="M10 4h4"/></svg>
<div class="t" style="left:839px;top:756px;font-size:13.1px;color:#f0f0f2;-webkit-text-stroke:0.2px #f0f0f2">Create an Alert</div>
<div class="a" style="left:945px;top:749px;width:147px;height:28px;border-radius:14px;background:#4b6be4"></div>
<svg class="i" style="left:955px;top:756px;stroke:#f2f4ff;stroke-width:2.2" width="13" height="13" viewBox="0 0 24 24"><path d="M5 12h14"/><path d="M12 5v14"/></svg>
<div class="t" style="left:977px;top:756px;font-size:13px;color:#f2f4ff;-webkit-text-stroke:0.45px #f2f4ff">Add to Dashboard</div>
<div class="a" style="left:1107px;top:748px;width:29px;height:29px;border-radius:50%;background:#131417"></div>
<svg class="i" style="left:1115px;top:755px;stroke:#d8d8dc;stroke-width:2" width="15" height="15" viewBox="0 0 24 24"><rect x="4" y="3" width="16" height="18" rx="2"/><path d="M4 15h16"/><path d="m9 8 3 3 3-3"/></svg>

<!-- CHAT -->
<div class="a" style="left:1343px;top:729px;width:41px;height:41px;border-radius:50%;background:#e9522b"></div>
<svg class="a" style="left:1343px;top:729px" width="42" height="42" viewBox="0 0 42 42"><circle cx="21" cy="19.4" r="10.1" fill="#fdf5ec"/><path d="M21.5 28.6L27.6 26.6L25.6 33.2Z" fill="#fdf5ec"/><path d="M14.4 13.3h5.4M11.9 17.3h7.9M12.1 21.3h7.7" stroke="#c9492c" stroke-width="1.7"/></svg>

</div></body></html>
